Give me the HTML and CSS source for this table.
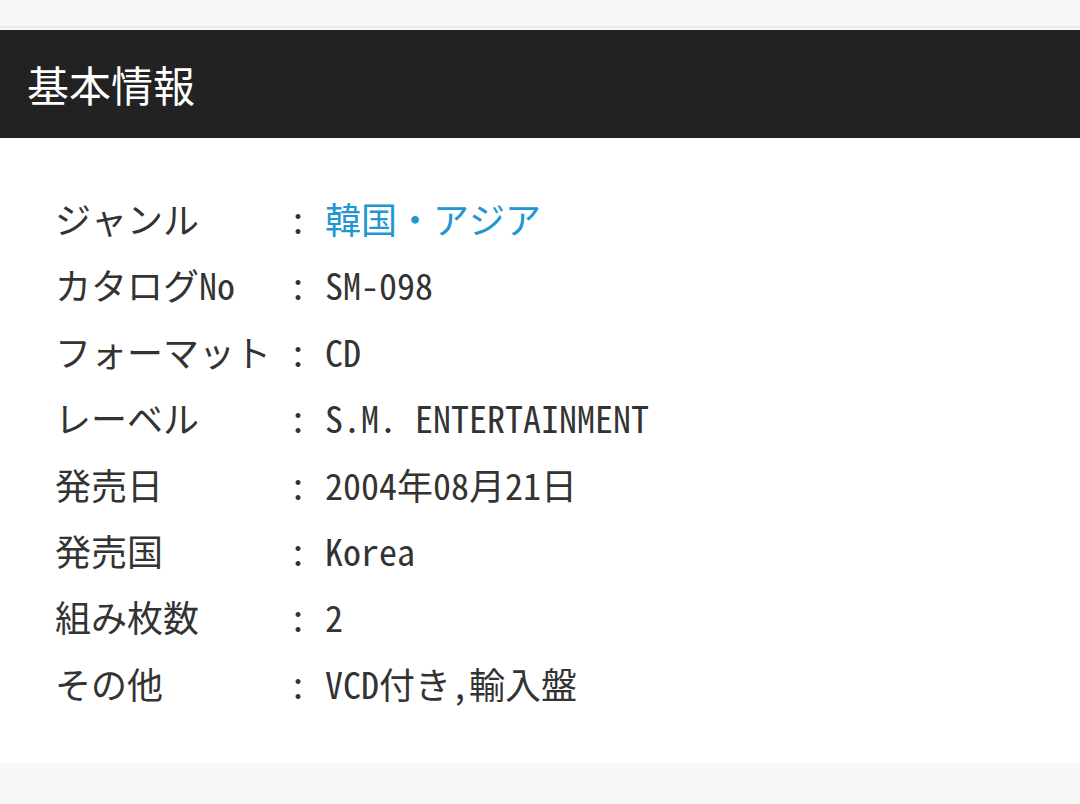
FILE: index.html
```html
<!DOCTYPE html>
<html lang="ja">
<head>
<meta charset="utf-8">
<link rel="stylesheet" href="styles.css">
</head>
<body>
<div class="top"></div>
<section class="panel">
  <h2 class="panel-title">基本情報</h2>
  <dl class="info">
    <dt>ジャンル</dt><dd>: <a class="link" href="#">韓国・アジア</a></dd>
    <dt>カタログNo</dt><dd>: SM-098</dd>
    <dt>フォーマット</dt><dd>: CD</dd>
    <dt>レーベル</dt><dd>: S.M. ENTERTAINMENT</dd>
    <dt>発売日</dt><dd>: 2004年08月21日</dd>
    <dt>発売国</dt><dd>: Korea</dd>
    <dt>組み枚数</dt><dd>: 2</dd>
    <dt>その他</dt><dd>: VCD付き,輸入盤</dd>
  </dl>
</section>
<div class="bottom"></div>
</body>
</html>
```
FILE: styles.css
```css
html, body {
  margin: 0;
  padding: 0;
  background: #f8f8f8;
  width: 1080px;
  height: 804px;
  overflow: hidden;
  font-family: "Noto Sans Mono CJK JP", "Noto Sans CJK JP", monospace;
  color: #333;
}
.top {
  height: 26px;
  border-bottom: 2px solid #ededed;
  margin-bottom: 2px;
}
.panel {
  background: #fff;
}
.panel-title {
  margin: 0;
  background: #222;
  color: #fff;
  font-weight: 400;
  font-size: 42px;
  line-height: 108px;
  height: 108px;
  padding-left: 27px;
  font-family: "Noto Sans CJK JP", sans-serif;
}
.info {
  margin: 0;
  padding: 47px 0 47px 55px;
  display: grid;
  grid-template-columns: 234px 1fr;
  font-size: 36px;
  line-height: 66.4px;
}
.info dt, .info dd {
  margin: 0;
  white-space: pre;
}
.link {
  color: #2196d3;
  text-decoration: none;
}
.bottom {
  height: 41px;
}
```
